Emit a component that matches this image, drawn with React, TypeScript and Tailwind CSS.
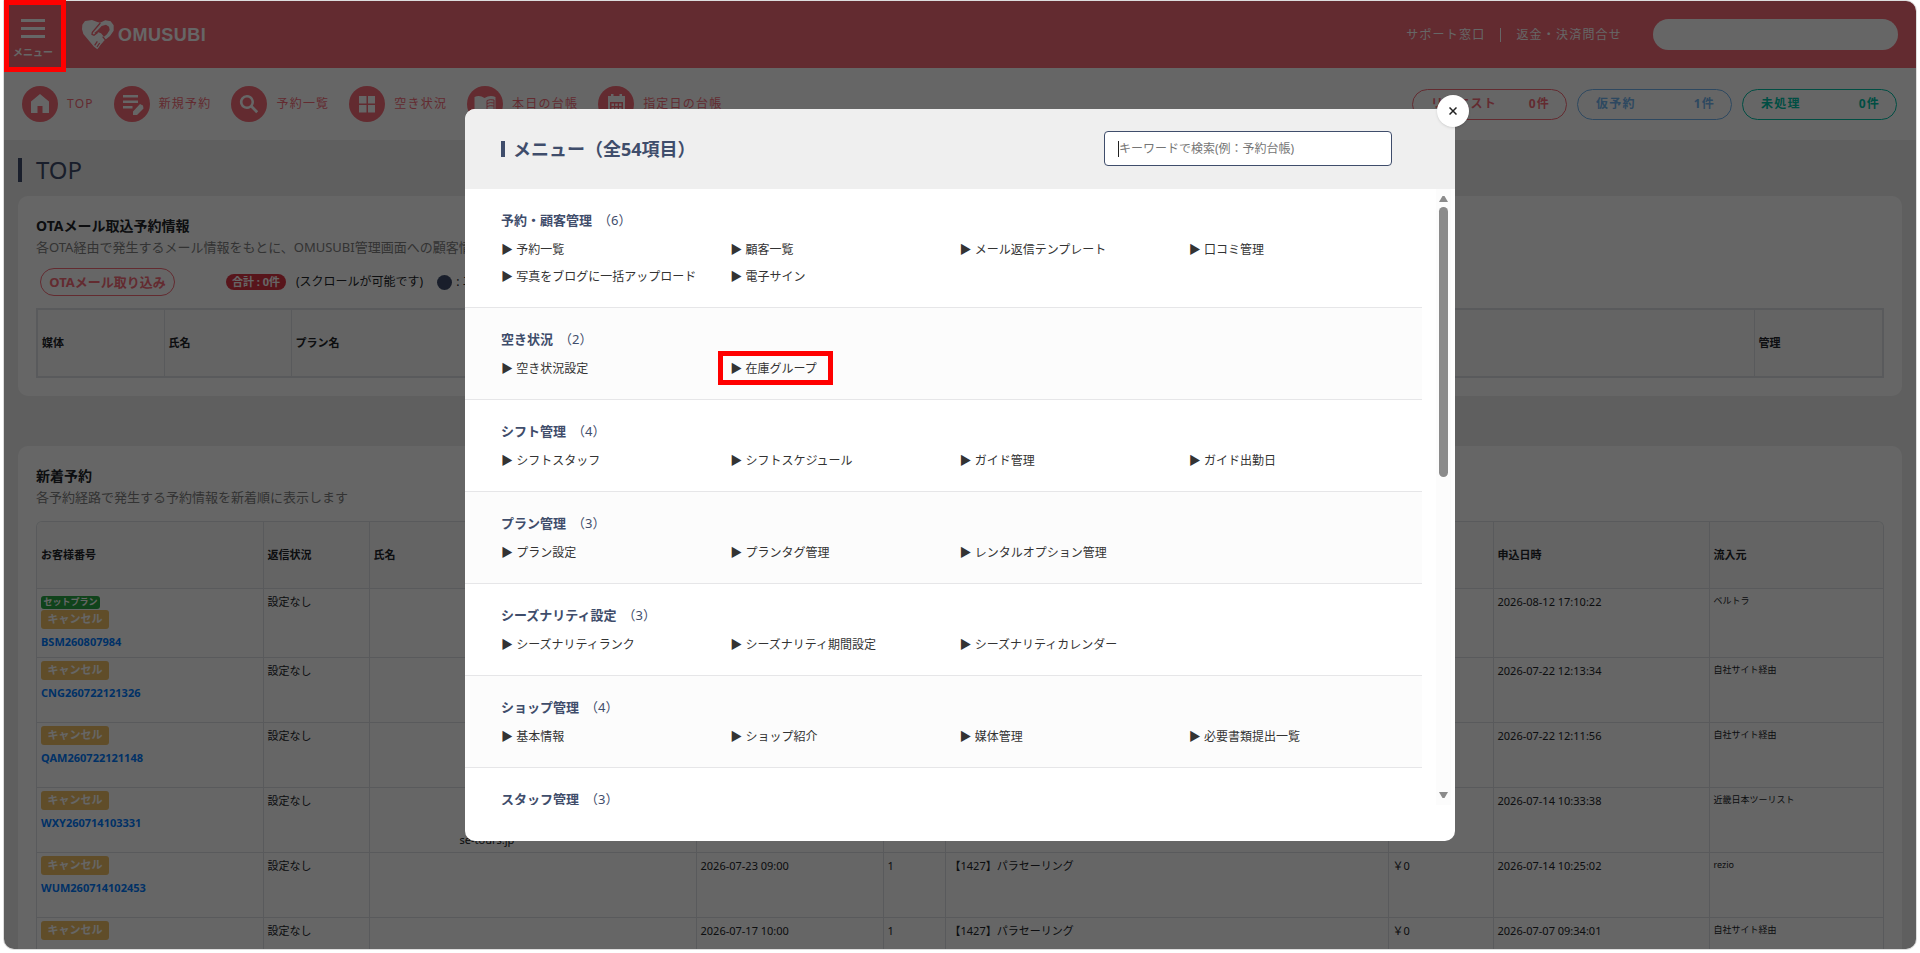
import type { ReactNode } from "react";
import clsx from "clsx";

const menuSections = [
  {
    title: "予約・顧客管理",
    count: 6,
    items: [
      "予約一覧",
      "顧客一覧",
      "メール返信テンプレート",
      "口コミ管理",
      "写真をブログに一括アップロード",
      "電子サイン",
    ],
  },
  { title: "空き状況", count: 2, items: ["空き状況設定", "在庫グループ"] },
  {
    title: "シフト管理",
    count: 4,
    items: ["シフトスタッフ", "シフトスケジュール", "ガイド管理", "ガイド出勤日"],
  },
  {
    title: "プラン管理",
    count: 3,
    items: ["プラン設定", "プランタグ管理", "レンタルオプション管理"],
  },
  {
    title: "シーズナリティ設定",
    count: 3,
    items: ["シーズナリティランク", "シーズナリティ期間設定", "シーズナリティカレンダー"],
  },
  {
    title: "ショップ管理",
    count: 4,
    items: ["基本情報", "ショップ紹介", "媒体管理", "必要書類提出一覧"],
  },
  { title: "スタッフ管理", count: 3, items: [] },
];

const bookings = [
  { id: "BSM260807984", set: true, contact: "", date: "", num: "", plan: "", price: "", applied: "2026-08-12 17:10:22", source: "ベルトラ" },
  { id: "CNG260722121326", contact: "", date: "", num: "", plan: "", price: "", applied: "2026-07-22 12:13:34", source: "自社サイト経由" },
  { id: "QAM260722121148", contact: "", date: "", num: "", plan: "", price: "", applied: "2026-07-22 12:11:56", source: "自社サイト経由" },
  { id: "WXY260714103331", contact: "se-tours.jp", date: "", num: "", plan: "", price: "", applied: "2026-07-14 10:33:38", source: "近畿日本ツーリスト" },
  { id: "WUM260714102453", contact: "", date: "2026-07-23 09:00", num: "1", plan: "【1427】パラセーリング", price: "￥0", applied: "2026-07-14 10:25:02", source: "rezio" },
  { id: "UCG260707093355", contact: "", date: "2026-07-17 10:00", num: "1", plan: "【1427】パラセーリング", price: "￥0", applied: "2026-07-07 09:34:01", source: "自社サイト経由" },
];

export default function App() {
  return (
    <div className="relative h-screen bg-white px-1 pt-px pb-1 font-['Noto_Sans','Noto_Sans_CJK_JP',sans-serif] text-[#212529]">
      <div className="relative h-full overflow-hidden rounded-b-[10px] rounded-tr-[10px] bg-[#eeeeee] outline outline-[#dddddd]">
        <Header />
        <QuickNav />
        <main className="px-3.5">
          <h1 className="mt-[18px] flex h-6 items-center text-2xl text-[#3f4d6b]">
            <span className="mr-3.5 h-6 w-1 bg-[#3f4d6b]" />
            TOP
          </h1>
          <MailImportCard />
          <NewBookingsCard />
        </main>
        <MenuDialog />
      </div>
      <div className="pointer-events-none absolute top-0 left-1 h-[72px] w-[62px] border-5 border-[#ff0000]" />
    </div>
  );
}

const Header = () => {
  return (
    <header className="flex h-[67px] items-center bg-[#f76b78] pr-[18px] text-white">
      <button type="button" className="flex w-[62px] flex-col items-center pt-2 pr-1">
        <span className="flex flex-col gap-[5px]">
          <span className="h-[3px] w-6 bg-white" />
          <span className="h-[3px] w-6 bg-white" />
          <span className="h-[3px] w-6 bg-white" />
        </span>
        <span className="mt-2 text-[10px] leading-3 font-bold whitespace-nowrap">メニュー</span>
      </button>
      <a href="#" className="ml-4 flex items-center gap-1">
        <LogoMark />
        <span className="font-['Liberation_Sans',sans-serif] text-lg font-bold tracking-wide">OMUSUBI</span>
      </a>
      <nav className="ml-auto flex items-center text-xs tracking-widest">
        <a href="#">サポート窓口</a>
        <span className="mx-[15px] h-3.5 w-px bg-white" />
        <a href="#">返金・決済問合せ</a>
      </nav>
      <div className="ml-[31px] h-[31px] w-[245px] rounded-full bg-white" />
    </header>
  );
};

const LogoMark = () => {
  return (
    <svg viewBox="0 0 96 90" className="h-[30px] w-8">
      <path
        fill="#fff"
        d="M1 14 9 3 30 0l14 5 10 3L70 1l16 3 9 12v16L84 48 66 62 46 88 36 80 4 42 0 28Z"
      />
      <path fill="#f76b78" d="m47 31 12-13 13-4 9 6 2 10-8 13-9 7-9-10-8-3-7 5-5-3Z" />
      <path
        fill="none"
        stroke="#f76b78"
        strokeWidth="4"
        d="M55 9 31 37l-1 6 6 3 10-8M38 76l8-12M45 81l8-12M53 84l7-12M62 50l10 12"
      />
    </svg>
  );
};

const QuickNav = () => {
  return (
    <div className="flex h-[72px] items-center bg-white pr-[19px] pl-[18px]">
      <nav className="flex gap-5">
        <NavItem label="TOP">
          <path d="M9 15.500 18 8l9 7.500V27h-6.500v-7h-5v7H9z" />
        </NavItem>
        <NavItem label="新規予約">
          <path d="M9 9h15v2.500H9zM9 14.500h15V17H9zM9 20h9.500v2.500H9zM19 25.500 26 18l3 1.500.5 3-6.500 6.500h-4z" />
        </NavItem>
        <NavItem label="予約一覧">
          <path
            fillRule="evenodd"
            d="M16 9a7 7 0 1 0 3.800 12.800l5.400 5.400 2-2-5.400-5.400A7 7 0 0 0 16 9Zm0 2.500a4.500 4.500 0 1 1 0 9 4.500 4.500 0 0 1 0-9Z"
          />
        </NavItem>
        <NavItem label="空き状況">
          <path d="M10 10h7.500v7.500H10zM19 10h7v7.500h-7zM10 19h7.500v7.500H10zM19 19h7v7.500h-7z" />
        </NavItem>
        <NavItem label="本日の台帳">
          <path d="M7.500 11q5-2.500 10 1 5.500-3.500 11-1v15.500q-5.500-2-11 1-5-3-10-1z" />
          <path stroke="#f76b78" fill="none" d="M20 14.500q3-1.500 7-.5v10q-4-1-7 .5zM20 17.500q3-1.500 7-.5M20 20.500q3-1.500 7-.5" />
        </NavItem>
        <NavItem label="指定日の台帳">
          <path d="M10 10h3V8h2.500v2h6V8H24v2h3v17H10z" />
          <path fill="#f76b78" d="M12 16h13v9.500H12z" />
          <path d="M13.500 17.500h2.500V20h-2.500zM17.200 17.500h2.500V20h-2.500zM21 17.500h2.500V20H21zM13.500 21.500h2.500V24h-2.500zM17.200 21.500h2.500V24h-2.500zM21 21.500h2.500V24H21z" />
        </NavItem>
      </nav>
      <div className="ml-auto flex gap-2.5">
        <StatusPill label="リクエスト" count={0} color="border-[#f76b78] text-[#f76b78]" />
        <StatusPill label="仮予約" count={1} color="border-[#73b5f0] text-[#73b5f0]" />
        <StatusPill label="未処理" count={0} color="border-[#00c2a8] text-[#00c2a8]" />
      </div>
    </div>
  );
};

const NavItem = ({ label, children }: { label: string; children: ReactNode }) => {
  return (
    <a href="#" className="flex items-center gap-[9px] text-xs tracking-widest text-[#f76b78]">
      <svg viewBox="0 0 36 36" className="size-9 rounded-full bg-[#f76b78] fill-white">
        {children}
      </svg>
      {label}
    </a>
  );
};

const StatusPill = ({ label, count, color }: { label: string; count: number; color: string }) => {
  return (
    <a
      href="#"
      className={clsx(
        "flex h-[31px] w-[155px] items-center justify-between rounded-full border pr-4 pl-[18px] text-xs font-bold tracking-widest",
        color
      )}
    >
      <span>{label}</span>
      <span>{count}件</span>
    </a>
  );
};

const MailImportCard = () => {
  return (
    <section className="mt-3.5 rounded-[10px] bg-white px-[18px] pt-5 pb-[18px]">
      <h2 className="text-sm font-bold">OTAメール取込予約情報</h2>
      <p className="mt-px text-[13px] leading-5 text-[#808080]">
        各OTA経由で発生するメール情報をもとに、OMUSUBI管理画面への顧客情報の取り込みを行います
      </p>
      <div className="mt-[11px] flex h-7 items-center pl-1 text-xs">
        <button
          type="button"
          className="h-7 w-[135px] rounded-full border border-[#f76b78] text-[13px] leading-6 font-bold text-[#f76b78]"
        >
          OTAメール取り込み
        </button>
        <span className="ml-[51px] flex h-4 w-[60px] items-center justify-center rounded-full bg-[#dc3545] text-[11px] font-bold text-white">
          合計 : 0件
        </span>
        <span className="ml-2.5">(スクロールが可能です)</span>
        <span className="mr-1 ml-3.5 size-[15px] rounded-full bg-[#3f4d6b]" />
        <span>: エラー</span>
      </div>
      <table className="mt-3 w-full table-fixed border-collapse border-2 border-[#dee2e6] text-left text-[11px]">
        <thead>
          <tr className="h-[68px] bg-[#fafafa]">
            <th className="w-[127px] border border-[#dee2e6] px-1">媒体</th>
            <th className="w-[127px] border border-[#dee2e6] px-1">氏名</th>
            <th className="border border-[#dee2e6] px-1">プラン名</th>
            <th className="w-[129px] border border-[#dee2e6] px-1">管理</th>
          </tr>
        </thead>
      </table>
    </section>
  );
};

const columns = [
  { label: "お客様番号", width: "w-[226px]" },
  { label: "返信状況", width: "w-[106px]" },
  { label: "氏名", width: "w-[327px]" },
  { label: "予約日時", width: "w-[187px]" },
  { label: "人数", width: "w-[62px]" },
  { label: "プラン名", width: "" },
  { label: "料金", width: "w-[105px]" },
  { label: "申込日時", width: "w-[216px]" },
  { label: "流入元", width: "w-[174px]" },
];

const NewBookingsCard = () => {
  return (
    <section className="mt-[50px] rounded-t-[10px] bg-white px-[18px] pt-5">
      <h2 className="text-sm font-bold">新着予約</h2>
      <p className="mt-px text-[13px] leading-5 text-[#808080]">各予約経路で発生する予約情報を新着順に表示します</p>
      <div className="mt-3.5 overflow-hidden rounded-t-md border border-b-0 border-[#dee2e6]">
        <table className="w-full table-fixed border-collapse text-left text-[11px]">
          <thead>
            <tr className="h-[66px] bg-[#fafafa]">
              {columns.map((column) => (
                <th
                  key={column.label}
                  className={clsx("border-r border-b border-[#dee2e6] px-1 last:border-r-0", column.width)}
                >
                  {column.label}
                </th>
              ))}
            </tr>
          </thead>
          <tbody>
            {bookings.map((booking) => (
              <tr
                key={booking.id}
                className={clsx(
                  "align-top [&>td]:border-r [&>td]:border-b [&>td]:border-[#dee2e6] [&>td]:px-1 [&>td]:pt-[5px] [&>td:last-child]:border-r-0",
                  booking.set ? "h-[69px]" : "h-[65px]"
                )}
              >
                <td>
                  {booking.set && (
                    <span className="mt-0.5 mb-px flex h-[13px] w-[59px] items-center justify-center rounded-[3px] bg-[#28a745] text-[9px] font-bold text-white">
                      セットプラン
                    </span>
                  )}
                  <span
                    className={clsx(
                      "flex h-[19px] w-[68px] items-center justify-center rounded-[3px] bg-[#f0c068] text-[11px] font-bold text-white",
                      !booking.set && "-mt-0.5"
                    )}
                  >
                    キャンセル
                  </span>
                  <a href="#" className="mt-1 block text-[11px] leading-[18px] font-bold text-[#007bff]">
                    {booking.id}
                  </a>
                </td>
                <td>設定なし</td>
                <td className="align-bottom">
                  <span className="block pb-[3px] pl-[86px]">{booking.contact}</span>
                </td>
                <td>{booking.date}</td>
                <td>{booking.num}</td>
                <td>{booking.plan}</td>
                <td>{booking.price}</td>
                <td>{booking.applied}</td>
                <td className="text-[9px]">{booking.source}</td>
              </tr>
            ))}
          </tbody>
        </table>
      </div>
    </section>
  );
};

const MenuDialog = () => {
  return (
    <div className="absolute inset-0 flex justify-center bg-black/60 py-[108px]">
      <div role="dialog" aria-label="メニュー" className="relative flex w-[990px] flex-col rounded-[10px] bg-white">
        <div className="flex h-20 items-center justify-between rounded-t-[10px] bg-[#efefef] pr-[63px] pb-px pl-9">
          <h2 className="flex items-center text-lg font-bold text-[#3f4d6b]">
            <span className="mr-2 h-4 w-1 bg-[#3f4d6b]" />
            メニュー（全54項目）
          </h2>
          <label className="relative flex items-center">
            <input
              type="text"
              autoFocus
              aria-label="キーワードで検索"
              placeholder="キーワードで検索(例：予約台帳)"
              className="h-[35px] w-72 rounded-[4px] border border-[#3f4d6b] bg-white px-3.5 text-xs caret-transparent outline-none placeholder:text-[#757575]"
            />
            <span className="absolute left-3.5 h-4 w-px bg-[#222222]" />
          </label>
        </div>
        <div className="mb-9 flex min-h-0 flex-1 pr-1">
          <div className="mr-3.5 flex-1 overflow-hidden">
            {menuSections.map((section) => (
              <section
                key={section.title}
                className="border-b border-[#e6e6e8] pt-[22px] pr-1 pb-[17px] pl-9 even:bg-[#fcfcfc]"
              >
                <h3 className="flex h-5 items-center text-[13px] font-bold text-[#3f4d6b]">
                  {section.title}
                  <span className="ml-1.5 font-normal">（{section.count}）</span>
                </h3>
                <ul className="mt-[5px] grid grid-cols-4 text-xs leading-[27px] text-[#333333]">
                  {section.items.map((item) => (
                    <li key={item} className="relative whitespace-nowrap">
                      <a href="#">▶ {item}</a>
                      {item === "在庫グループ" && (
                        <span className="pointer-events-none absolute -top-1 -left-3 h-[34px] w-[115px] border-5 border-[#ff0000]" />
                      )}
                    </li>
                  ))}
                </ul>
              </section>
            ))}
          </div>
          <div className="flex w-[15px] flex-col items-center bg-[#fcfcfc] py-1.5">
            <ScrollArrow className="rotate-180" />
            <span className="mt-1 h-[270px] w-[9px] rounded-full bg-[#8b8b8b]" />
            <ScrollArrow className="mt-auto" />
          </div>
        </div>
        <button
          type="button"
          aria-label="閉じる"
          className="absolute -top-3.5 -right-3.5 flex size-8 items-center justify-center rounded-full bg-white shadow-sm"
        >
          <svg viewBox="0 0 8 8" className="size-2 stroke-[#222222] stroke-[1.5]">
            <path d="m.5.5 7 7M7.500.5l-7 7" />
          </svg>
        </button>
      </div>
    </div>
  );
};

const ScrollArrow = ({ className }: { className: string }) => {
  return (
    <svg viewBox="0 0 9 8" className={clsx("h-2 w-[9px] fill-[#8b8b8b]", className)}>
      <path d="M0 1h9L5.500 7h-2z" />
    </svg>
  );
};
